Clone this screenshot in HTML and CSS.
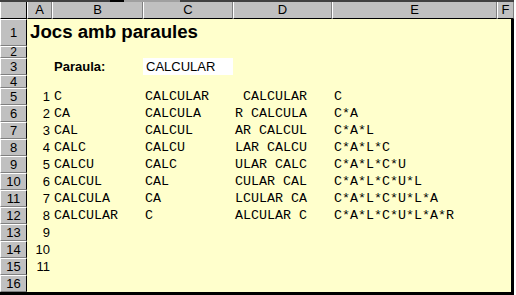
FILE: index.html
```html
<!DOCTYPE html>
<html>
<head>
    <meta charset="UTF-8">
    <title>Jocs amb paraules</title>
    <link rel="stylesheet" href="styles.css">
</head>
<body>
    <div class="topbar"><span class="seg-dark"></span><span class="seg-light"></span></div>

    <div class="sheet">
        <div class="row head">
            <div class="ch corner"></div>
            <div class="ch">A</div>
            <div class="ch">B</div>
            <div class="ch">C</div>
            <div class="ch">D</div>
            <div class="ch">E</div>
            <div class="ch">F</div>
        </div>

        <div class="body">
            <div class="row r1">
                <div class="rh">1</div>
                <div class="title">Jocs amb paraules</div>
            </div>
            <div class="row r2"><div class="rh">2</div></div>
            <div class="row r3">
                <div class="rh">3</div>
                <div class="cell"></div>
                <div class="cell label">Paraula:</div>
                <div class="cell input">CALCULAR</div>
            </div>
            <div class="row r4"><div class="rh">4</div></div>

            <div class="row"><div class="rh">5</div><div class="cell num">1</div><div class="cell mono">C</div><div class="cell mono">CALCULAR</div><div class="cell mono"> CALCULAR</div><div class="cell mono">C</div></div>
            <div class="row"><div class="rh">6</div><div class="cell num">2</div><div class="cell mono">CA</div><div class="cell mono">CALCULA</div><div class="cell mono">R CALCULA</div><div class="cell mono">C*A</div></div>
            <div class="row"><div class="rh">7</div><div class="cell num">3</div><div class="cell mono">CAL</div><div class="cell mono">CALCUL</div><div class="cell mono">AR CALCUL</div><div class="cell mono">C*A*L</div></div>
            <div class="row"><div class="rh">8</div><div class="cell num">4</div><div class="cell mono">CALC</div><div class="cell mono">CALCU</div><div class="cell mono">LAR CALCU</div><div class="cell mono">C*A*L*C</div></div>
            <div class="row"><div class="rh">9</div><div class="cell num">5</div><div class="cell mono">CALCU</div><div class="cell mono">CALC</div><div class="cell mono">ULAR CALC</div><div class="cell mono">C*A*L*C*U</div></div>
            <div class="row"><div class="rh">10</div><div class="cell num">6</div><div class="cell mono">CALCUL</div><div class="cell mono">CAL</div><div class="cell mono">CULAR CAL</div><div class="cell mono">C*A*L*C*U*L</div></div>
            <div class="row"><div class="rh">11</div><div class="cell num">7</div><div class="cell mono">CALCULA</div><div class="cell mono">CA</div><div class="cell mono">LCULAR CA</div><div class="cell mono">C*A*L*C*U*L*A</div></div>
            <div class="row"><div class="rh">12</div><div class="cell num">8</div><div class="cell mono">CALCULAR</div><div class="cell mono">C</div><div class="cell mono">ALCULAR C</div><div class="cell mono">C*A*L*C*U*L*A*R</div></div>
            <div class="row"><div class="rh">13</div><div class="cell num">9</div></div>
            <div class="row"><div class="rh">14</div><div class="cell num">10</div></div>
            <div class="row"><div class="rh">15</div><div class="cell num">11</div></div>
            <div class="row"><div class="rh">16</div></div>
        </div>
    </div>
</body>
</html>
```

FILE: styles.css
```css
body { margin: 0; background: #fff; font-family: "Liberation Sans", Arial, sans-serif; font-size: 13px; color: #000; }

.topbar { width: 514px; height: 2px; background: #404040; display: flex; }
.seg-dark { margin-left: 110px; width: 14px; background: #000; }
.seg-light { width: 56px; background: #a0a0a0; }

.sheet { width: 514px; }
.row { display: grid; grid-template-columns: 27px 25px 91px 90px 99px 165px 1fr; height: 17px; }

/* column headers */
.head { background: #c0c0c0; }
.ch { box-sizing: border-box; border-left: 1px solid #fff; border-right: 1px solid #808080; border-bottom: 1px solid #000; text-align: center; line-height: 16px; }
.ch.corner { border-right: 1px solid #000; }

/* data area */
.body { box-sizing: border-box; width: 514px; background: #ffffcc; border-right: 3px solid #000; border-bottom: 3px solid #000; }
.r1 { height: 27px; }
.r2 { height: 12px; }
.r4 { height: 13px; }

.rh { box-sizing: border-box; background: #c0c0c0; border-top: 1px solid #fff; border-left: 1px solid #fff; border-bottom: 1px solid #808080; border-right: 1px solid #000; display: flex; align-items: center; justify-content: center; line-height: 1; overflow: hidden; }
.r2 .rh { font-size: 12px; line-height: 10px; }

.cell { display: flex; align-items: flex-end; padding: 0 2px 1px; white-space: pre; }
.num { justify-content: flex-end; }
.mono { font-family: "Liberation Mono", "Courier New", monospace; font-size: 13.33px; }

.title { grid-column: 2 / 7; font-weight: bold; font-size: 18.67px; padding: 0 3px 3px; display: flex; align-items: flex-end; }
.label { font-weight: bold; }
.input { background: #fff; padding-left: 3px; }
```
